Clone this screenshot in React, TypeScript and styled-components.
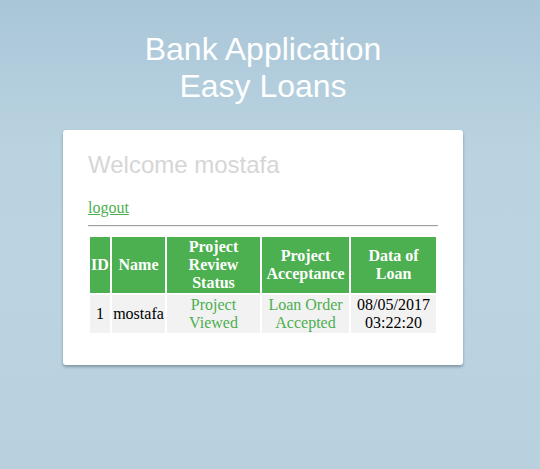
import React from "react";
import styled, { createGlobalStyle } from "styled-components";

const Global = createGlobalStyle`
  html, body {
    margin: 0;
    padding: 0;
    min-height: 469px;
    background: linear-gradient(180deg, #a9c6d8 0%, #bad3e0 32%, #bcd4e1 60%, #b9d1de 100%);
    background-attachment: fixed;
  }
`;

const Page = styled.div`
  width: 526px;
  min-height: 469px;
  display: flex;
  flex-direction: column;
  align-items: center;
`;

const Title = styled.h1`
  margin: 31px 0 0;
  font-family: "Liberation Sans", Arial, sans-serif;
  font-size: 32px;
  font-weight: normal;
  line-height: 37px;
  color: #ffffff;
  text-align: center;
`;

const Card = styled.div`
  box-sizing: border-box;
  width: 400px;
  margin-top: 25px;
  padding: 21px 25px 30px;
  background: #ffffff;
  border-radius: 3px;
  box-shadow: 0 2px 3px rgba(60, 80, 90, 0.45);
`;

const Welcome = styled.h2`
  margin: 0;
  font-family: "Liberation Sans", Arial, sans-serif;
  font-size: 24px;
  font-weight: normal;
  line-height: 28px;
  color: #d6d6d6;
`;

const LogoutLine = styled.p`
  margin: 20px 0 0;
  font-family: "Liberation Serif", "Times New Roman", serif;
  font-size: 16px;
  line-height: 18px;
`;

const Logout = styled.a`
  color: #4caf50;
  text-decoration: underline;
`;

const Rule = styled.hr`
  margin: 8px 0 0;
  border: none;
  border-top: 1px solid #a0a0a0;
  border-bottom: 1px solid #efefef;
`;

const Table = styled.table`
  width: 100%;
  margin-top: 8px;
  border-spacing: 2px;
  font-family: "Liberation Serif", "Times New Roman", serif;
  font-size: 16px;
  line-height: 18px;
`;

const Th = styled.th<{ $w: number }>`
  width: ${(p) => p.$w}px;
  padding: 1px;
  background: #4caf50;
  color: #ffffff;
  font-weight: bold;
  text-align: center;
`;

const Td = styled.td<{ $green?: boolean }>`
  padding: 1px;
  background: #f2f2f2;
  color: ${(p) => (p.$green ? "#4caf50" : "#000000")};
  text-align: center;
`;

const columns = [
  { label: "ID", w: 18 },
  { label: "Name", w: 51 },
  { label: "Project Review Status", w: 91 },
  { label: "Project Acceptance", w: 85 },
  { label: "Data of Loan", w: 83 },
];

export default function App() {
  return (
    <>
      <Global />
      <Page>
        <Title>
          Bank Application
          <br />
          Easy Loans
        </Title>
        <Card>
          <Welcome>Welcome mostafa</Welcome>
          <LogoutLine>
            <Logout href="#">logout</Logout>
          </LogoutLine>
          <Rule />
          <Table>
            <thead>
              <tr>
                {columns.map((c) => (
                  <Th key={c.label} $w={c.w}>
                    {c.label}
                  </Th>
                ))}
              </tr>
            </thead>
            <tbody>
              <tr>
                <Td>1</Td>
                <Td>mostafa</Td>
                <Td $green>Project Viewed</Td>
                <Td $green>Loan Order Accepted</Td>
                <Td>
                  08/05/2017
                  <br />
                  03:22:20
                </Td>
              </tr>
            </tbody>
          </Table>
        </Card>
      </Page>
    </>
  );
}
